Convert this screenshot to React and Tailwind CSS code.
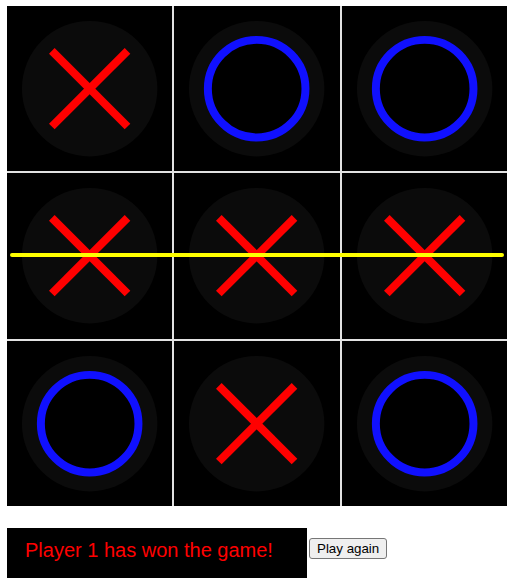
import React from "react";

const board = ["X", "O", "O", "X", "X", "X", "O", "X", "O"];

function Mark({ v }) {
  return (
    <svg viewBox="0 0 166 166" className="block w-full h-full">
      <circle cx="83" cy="83" r="68" fill="#0b0b0b" />
      {v === "X" && (
        <g stroke="#ff0000" strokeWidth="8" strokeLinecap="butt">
          <line x1="45" y1="45" x2="121" y2="121" />
          <line x1="121" y1="45" x2="45" y2="121" />
        </g>
      )}
      {v === "O" && (
        <circle cx="83" cy="83" r="49" fill="#000000" stroke="#1010ff" strokeWidth="8" />
      )}
    </svg>
  );
}

export default function App() {
  return (
    <div
      className="bg-white w-[521px] h-[588px] pt-[6px] pl-[7px]"
      style={{ fontFamily: '"Liberation Sans", Arial, sans-serif' }}
    >
      <div className="relative w-[500px] h-[500px]">
        <div className="grid grid-cols-3 grid-rows-3 gap-[2px] w-full h-full bg-[#e2e2e2]">
          {board.map((v, i) => (
            <div key={i} className="bg-black overflow-hidden">
              <Mark v={v} />
            </div>
          ))}
        </div>
        <svg
          className="absolute left-0 top-0 pointer-events-none"
          width="500"
          height="500"
          viewBox="0 0 500 500"
        >
          <line x1="5" y1="249" x2="495" y2="249" stroke="#ffff00" strokeWidth="4" strokeLinecap="round" />
        </svg>
      </div>
      <div className="flex items-start mt-[22px]">
        <div className="w-[300px] h-[50px] bg-black pt-[11px] pl-[18px] text-[20px] leading-[23px] text-[#ff0000]">
          Player 1 has won the game!
        </div>
        <button className="ml-[2px] mt-[10px] h-[21px] px-[7px] bg-[#efefef] border border-[#767676] rounded-[3px] text-[13.33px] leading-[15px] text-black">
          Play again
        </button>
      </div>
    </div>
  );
}
